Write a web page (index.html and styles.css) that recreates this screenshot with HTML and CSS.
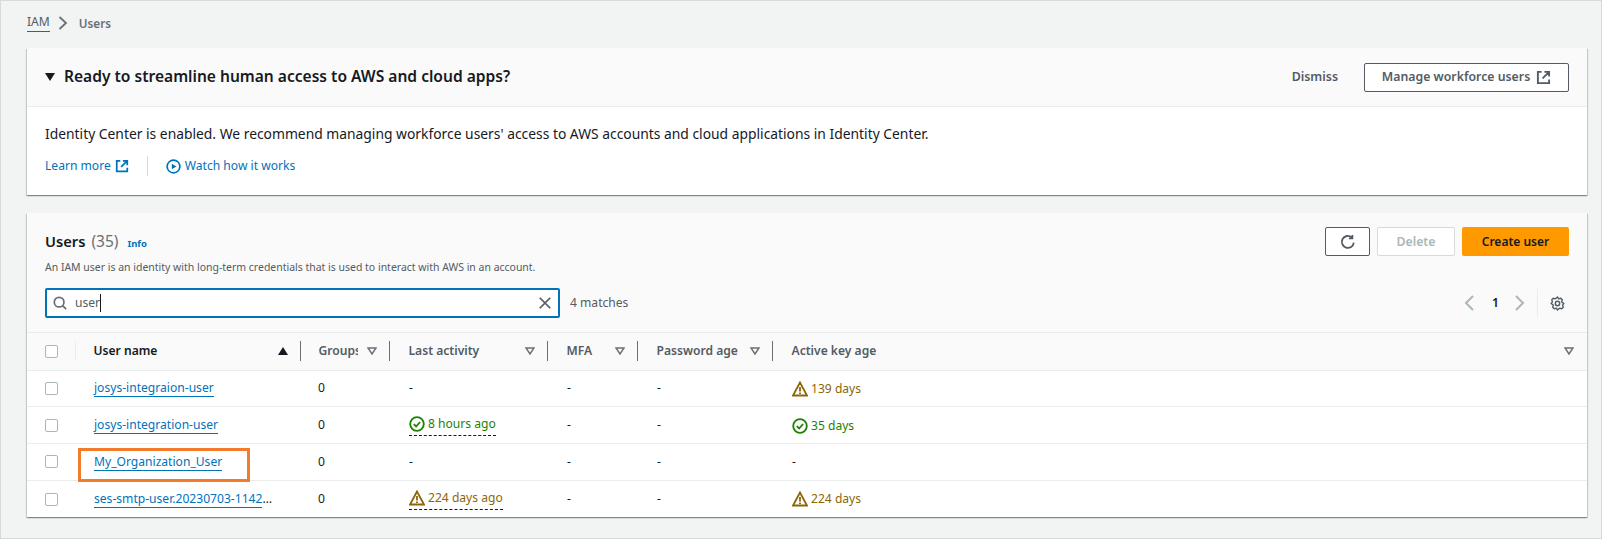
FILE: index.html
```html
<!DOCTYPE html>
<html lang="en">
<head>
<meta charset="utf-8">
<title>IAM Users</title>
<link rel="stylesheet" href="styles.css">
</head>
<body>
<div class="frame">
  <nav class="crumbs">
    <a class="crumb-link">IAM</a>
    <svg class="crumb-sep" viewBox="0 0 10 14" width="10" height="14"><path d="M1.500 1l6.500 6-6.500 6" fill="none" stroke="#687078" stroke-width="1.800"/></svg>
    <span class="crumb-cur">Users</span>
  </nav>

  <section class="card promo">
    <header class="promo-head">
      <svg class="caret" viewBox="0 0 10 8" width="10" height="8"><path d="M0 0h10L5 8z" fill="#16191f"/></svg>
      <h2 class="promo-title">Ready to streamline human access to AWS and cloud apps?</h2>
      <span class="dismiss">Dismiss</span>
      <span class="btn btn-outline btn-manage">Manage workforce users
        <svg viewBox="0 0 16 16" width="15" height="15"><path d="M6 2H2v12h12v-4M9 2h5v5M14 2L7 9" fill="none" stroke="#545b64" stroke-width="2"/></svg>
      </span>
    </header>
    <div class="promo-body">
      <p class="promo-text">Identity Center is enabled. We recommend managing workforce users' access to AWS accounts and cloud applications in Identity Center.</p>
      <div class="promo-links">
        <a class="link">Learn more
          <svg viewBox="0 0 16 16" width="14" height="14"><path d="M6 2H2v12h12v-4M9 2h5v5M14 2L7 9" fill="none" stroke="#0073bb" stroke-width="2"/></svg>
        </a>
        <span class="vsep"></span>
        <a class="link">
          <svg viewBox="0 0 16 16" width="15" height="15"><circle cx="8" cy="8" r="6.800" fill="none" stroke="#0073bb" stroke-width="1.800"/><path d="M6.200 5l5 3-5 3z" fill="#0073bb"/></svg>
          Watch how it works
        </a>
      </div>
    </div>
  </section>

  <section class="card users">
    <header class="users-head">
      <div class="users-heading">
        <div class="users-title"><h2>Users</h2> <span class="count">(35)</span> <a class="info">Info</a></div>
        <p class="users-desc">An IAM user is an identity with long-term credentials that is used to interact with AWS in an account.</p>
      </div>
      <div class="actions">
        <span class="btn btn-outline btn-icon">
          <svg viewBox="0 0 16 16" width="16" height="16"><path d="M13.800 8.600A6 6 0 1 1 11.600 3.200M12.400 1v3.400H9" fill="none" stroke="#545b64" stroke-width="1.800"/></svg>
        </span>
        <span class="btn btn-disabled">Delete</span>
        <span class="btn btn-primary">Create user</span>
      </div>
    </header>
    <div class="toolbar">
      <div class="search">
        <svg viewBox="0 0 16 16" width="14" height="14"><circle cx="7" cy="7" r="5.500" fill="none" stroke="#687078" stroke-width="2"/><path d="M11 11l4 4" stroke="#687078" stroke-width="2"/></svg>
        <span class="search-value">user</span><span class="caret-bar"></span>
        <svg class="clear" viewBox="0 0 16 16" width="14" height="14"><path d="M2 2l12 12M14 2L2 14" stroke="#545b64" stroke-width="2"/></svg>
      </div>
      <span class="matches">4 matches</span>
      <div class="pager">
        <svg viewBox="0 0 10 16" width="10" height="16"><path d="M9 1L2 8l7 7" fill="none" stroke="#aab7b8" stroke-width="2"/></svg>
        <span class="page-num">1</span>
        <svg viewBox="0 0 10 16" width="10" height="16"><path d="M1 1l7 7-7 7" fill="none" stroke="#aab7b8" stroke-width="2"/></svg>
        <span class="pager-sep"></span>
        <svg viewBox="0 0 16 16" width="15" height="15"><circle cx="8" cy="8" r="2.300" fill="none" stroke="#545b64" stroke-width="1.600"/><path d="M8 1l1.200 2 2.300-.6 1.600 1.700-.7 2.200L14.800 8l-1.400 1.700.7 2.200-1.600 1.700-2.300-.6L8 15l-1.200-2-2.300.6-1.600-1.700.7-2.200L1.200 8l1.400-1.700-.7-2.200 1.600-1.700 2.300.6z" fill="none" stroke="#545b64" stroke-width="1.500" stroke-linejoin="round"/></svg>
      </div>
    </div>
    <table class="grid">
      <colgroup>
        <col class="c-check"><col class="c-name"><col class="c-groups"><col class="c-activity"><col class="c-mfa"><col class="c-pass"><col>
      </colgroup>
      <thead>
        <tr>
          <th class="th-check"><span class="box"></span></th>
          <th class="th-strong"><div class="th-in"><span class="th-label">User name</span><svg viewBox="0 0 10 8" width="10" height="8"><path d="M0 8h10L5 0z" fill="#16191f"/></svg></div></th>
          <th class="sep th-groups"><div class="th-in"><span class="th-label th-clip">Groups</span><svg class="sort" viewBox="0 0 10 8" width="10" height="8"><path d="M1 1h8L5 7z" fill="none" stroke="#687078" stroke-width="1.500"/></svg></div></th>
          <th class="sep"><div class="th-in"><span class="th-label">Last activity</span><svg class="sort" viewBox="0 0 10 8" width="10" height="8"><path d="M1 1h8L5 7z" fill="none" stroke="#687078" stroke-width="1.500"/></svg></div></th>
          <th class="sep"><div class="th-in"><span class="th-label">MFA</span><svg class="sort" viewBox="0 0 10 8" width="10" height="8"><path d="M1 1h8L5 7z" fill="none" stroke="#687078" stroke-width="1.500"/></svg></div></th>
          <th class="sep"><div class="th-in"><span class="th-label">Password age</span><svg class="sort" viewBox="0 0 10 8" width="10" height="8"><path d="M1 1h8L5 7z" fill="none" stroke="#687078" stroke-width="1.500"/></svg></div></th>
          <th class="sep"><div class="th-in"><span class="th-label">Active key age</span><svg class="sort" viewBox="0 0 10 8" width="10" height="8"><path d="M1 1h8L5 7z" fill="none" stroke="#687078" stroke-width="1.500"/></svg></div></th>
        </tr>
      </thead>
      <tbody>
        <tr>
          <td class="td-check"><span class="box"></span></td>
          <td><a class="user-link">josys-integraion-user</a></td>
          <td>0</td><td>-</td><td>-</td><td>-</td>
          <td><span class="warn"><svg viewBox="0 0 16 16" width="16" height="16"><path d="M8 1.500L1 14.500h14z" fill="none" stroke="#8d6605" stroke-width="1.800"/><path d="M8 6v4.500M8 11.500v1.500" stroke="#8d6605" stroke-width="1.800"/></svg> 139 days</span></td>
        </tr>
        <tr>
          <td class="td-check"><span class="box"></span></td>
          <td><a class="user-link">josys-integration-user</a></td>
          <td>0</td>
          <td><span class="ok dashed"><svg viewBox="0 0 16 16" width="16" height="16"><circle cx="8" cy="8" r="6.800" fill="none" stroke="#1d8102" stroke-width="1.800"/><path d="M4.800 8.200l2.300 2.300 4-4.500" fill="none" stroke="#1d8102" stroke-width="1.800"/></svg> 8 hours ago</span></td>
          <td>-</td><td>-</td>
          <td><span class="ok"><svg viewBox="0 0 16 16" width="16" height="16"><circle cx="8" cy="8" r="6.800" fill="none" stroke="#1d8102" stroke-width="1.800"/><path d="M4.800 8.200l2.300 2.300 4-4.500" fill="none" stroke="#1d8102" stroke-width="1.800"/></svg> 35 days</span></td>
        </tr>
        <tr>
          <td class="td-check"><span class="box"></span></td>
          <td class="name-cell"><a class="user-link">My_Organization_User</a><span class="highlight"></span></td>
          <td>0</td><td>-</td><td>-</td><td>-</td><td>-</td>
        </tr>
        <tr>
          <td class="td-check"><span class="box"></span></td>
          <td><a class="user-link user-trunc">ses-smtp-user.20230703-1142</a><span class="ellipsis">…</span></td>
          <td>0</td>
          <td><span class="warn dashed"><svg viewBox="0 0 16 16" width="16" height="16"><path d="M8 1.500L1 14.500h14z" fill="none" stroke="#8d6605" stroke-width="1.800"/><path d="M8 6v4.500M8 11.500v1.500" stroke="#8d6605" stroke-width="1.800"/></svg> 224 days ago</span></td>
          <td>-</td><td>-</td>
          <td><span class="warn"><svg viewBox="0 0 16 16" width="16" height="16"><path d="M8 1.500L1 14.500h14z" fill="none" stroke="#8d6605" stroke-width="1.800"/><path d="M8 6v4.500M8 11.500v1.500" stroke="#8d6605" stroke-width="1.800"/></svg> 224 days</span></td>
        </tr>
      </tbody>
    </table>
  </section>
</div>
</body>
</html>
```
FILE: styles.css
```css
* { box-sizing: border-box; }
html, body { margin: 0; padding: 0; }
body {
  width: 1602px; height: 539px; overflow: hidden;
  background: #f2f3f3; color: #16191f;
  font-family: "Noto Sans", "Open Sans", sans-serif; font-size: 12.100px; line-height: 18px;
}
svg { display: block; flex: none; }
h2, p { margin: 0; }
.frame {
  width: 1602px; height: 539px;
  border: 1px solid #d5dbdb;
  padding: 13px 15px 0 26px;
}
.crumbs { display: flex; align-items: center; height: 18px; margin-bottom: 16px; }
.crumb-link { color: #545b64; border-bottom: 1px solid #0073bb; line-height: 16px; height: 18px; }
.crumb-sep { margin: 0 11px 0 8px; }
.crumb-cur { color: #687078; font-weight: 600; font-size: 11.700px; }
.card { background: #fff; box-shadow: 0 1px 1px rgba(0,28,36,.3), 1px 1px 1px rgba(0,28,36,.15), -1px 1px 1px rgba(0,28,36,.15); width: 1560px; }
.promo { height: 147px; margin-bottom: 18px; }
.promo-head {
  height: 59px; display: flex; align-items: center; background: #fafafa;
  border-bottom: 1px solid #eaeded; padding: 0 18px 0 18px;
}
.caret { margin-right: 9px; }
.promo-title { font-size: 15.570px; font-weight: 600; flex: 1; margin-top: -2px; }
.dismiss { color: #545b64; font-weight: 600; font-size: 12.400px; margin-right: 26px; }
.btn { display: flex; align-items: center; justify-content: center; height: 29px; border-radius: 2px; font-weight: 600; font-size: 12.300px; }
.btn-outline { border: 1px solid #545b64; color: #545b64; background: #fff; }
.btn-manage { width: 205px; gap: 6px; }
.promo-body { padding: 18px 18px 0; }
.promo-text { font-size: 13.850px; color: #16191f; }
.promo-links { display: flex; align-items: center; margin-top: 13px; height: 20px; }
.link { display: flex; align-items: center; gap: 4px; color: #0073bb; font-size: 12.100px; }
.vsep { width: 1px; height: 20px; background: #d5dbdb; margin: 0 18px; }
.users-head { display: flex; justify-content: space-between; background: #fafafa; padding: 14px 18px 0 18px; height: 68px; }
.users-title { display: flex; align-items: baseline; gap: 6px; margin-top: 5px; }
.users-title h2 { font-size: 14.700px; font-weight: 600; }
.count { font-size: 15.500px; color: #687078; }
.info { font-size: 9.500px; font-weight: 700; color: #0073bb; margin-left: 3px; }
.users-desc { font-size: 10.480px; color: #545b64; margin-top: 7px; line-height: 14px; }
.actions { display: flex; gap: 7px; }
.btn-icon { width: 45px; }
.btn-disabled { width: 78px; border: 1px solid #d5dbdb; color: #aab7b8; background: #fff; }
.btn-primary { width: 107px; background: #ff9900; color: #16191f; font-size: 12px; }
.toolbar { display: flex; align-items: center; height: 52px; background: #fafafa; border-bottom: 1px solid #eaeded; padding: 7px 22px 14px 18px; }
.search {
  display: flex; align-items: center; width: 515px; height: 30px; flex: none;
  background: #fff; border: 2px solid #0073bb; border-radius: 2px; padding: 0 6px 0 6px;
}
.search-value { margin-left: 8px; color: #545b64; }
.caret-bar { width: 1px; height: 18px; background: #16191f; }
.clear { margin-left: auto; }
.matches { margin-left: 10px; color: #545b64; }
.pager { display: flex; align-items: center; margin-left: auto; }
.page-num { margin: 0 16px 0 18px; font-weight: 600; color: #16191f; }
.pager-sep { width: 1px; height: 28px; background: #eaeded; margin: 0 12px 0 12px; }
.grid { width: 100%; border-collapse: collapse; table-layout: fixed; }
.c-check { width: 48px; }
.c-name { width: 226px; }
.c-groups { width: 89px; }
.c-activity { width: 158px; }
.c-mfa { width: 90px; }
.c-pass { width: 135px; }
thead tr { height: 37px; background: #fafafa; }
th { padding: 0; text-align: left; font-weight: 600; color: #545b64; position: relative; border-bottom: 1px solid #eaeded; }
.th-in { display: flex; align-items: center; justify-content: space-between; padding: 0 12px 0 18.500px; height: 20px; }
.th-strong { color: #16191f; }
.th-strong .th-in { padding-left: 17.500px; border-left: 1px solid #eaeded; border-right: 1px solid #687078; }
.sep .th-in { border-right: 1px solid #687078; }
.th-groups .th-in { padding-left: 17.500px; }
.sep:last-child .th-in { border-right: 0; padding-right: 13px; }
.th-clip { width: 39px; overflow: hidden; white-space: nowrap; }
.th-check { padding-left: 18px; }
.box { display: block; width: 13px; height: 13px; border: 1px solid #aab7b8; border-radius: 2px; background: #fff; }
td { padding: 0 0 0 19px; height: 36.800px; border-bottom: 1px solid #eaeded; color: #16191f; white-space: nowrap; }
tr:last-child td { border-bottom: 0; }
.td-check { padding-left: 18px; }
tbody td:nth-child(3) { padding-left: 17px; }
.user-link { color: #0073bb; border-bottom: 1px solid #0073bb; }
.name-cell { position: relative; }
.highlight { position: absolute; left: 3px; top: 4px; width: 172px; height: 34px; border: 3px solid #f47b2b; }
.warn, .ok { display: inline-flex; align-items: center; gap: 3px; vertical-align: middle; }
.warn { color: #8d6605; }
.ok { color: #1d8102; }
.dashed { border-bottom: 1px dashed #16191f; padding-bottom: 2px; }
```
